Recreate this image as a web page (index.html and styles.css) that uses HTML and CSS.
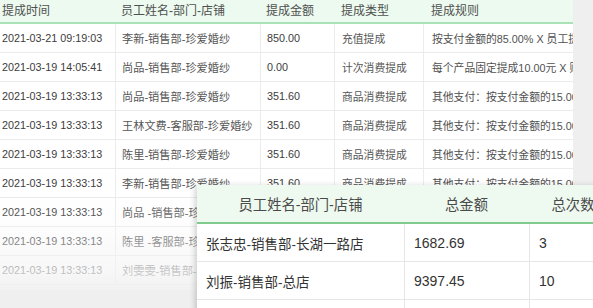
FILE: index.html
```html
<!DOCTYPE html>
<html lang="zh">
<head>
<meta charset="utf-8">
<title>提成明细</title>
<link rel="stylesheet" href="styles.css">
</head>
<body>
<div class="page">
  <div class="main">
    <div class="grid">
      <div class="row head">
        <div class="c">提成时间</div><div class="c">员工姓名-部门-店铺</div><div class="c">提成金额</div><div class="c">提成类型</div><div class="c">提成规则</div>
      </div>
      <div class="row">
        <div class="c num">2021-03-21 09:19:03</div><div class="c">李新-销售部-珍爱婚纱</div><div class="c num">850.00</div><div class="c">充值提成</div><div class="c">按支付金额的85.00% X 员工提成比例</div>
      </div>
      <div class="row">
        <div class="c num">2021-03-19 14:05:41</div><div class="c">尚品-销售部-珍爱婚纱</div><div class="c num">0.00</div><div class="c">计次消费提成</div><div class="c">每个产品固定提成10.00元 X 购买数量</div>
      </div>
      <div class="row">
        <div class="c num">2021-03-19 13:33:13</div><div class="c">尚品-销售部-珍爱婚纱</div><div class="c num">351.60</div><div class="c">商品消费提成</div><div class="c">其他支付：按支付金额的15.00%</div>
      </div>
      <div class="row">
        <div class="c num">2021-03-19 13:33:13</div><div class="c">王林文费-客服部-珍爱婚纱</div><div class="c num">351.60</div><div class="c">商品消费提成</div><div class="c">其他支付：按支付金额的15.00%</div>
      </div>
      <div class="row">
        <div class="c num">2021-03-19 13:33:13</div><div class="c">陈里-销售部-珍爱婚纱</div><div class="c num">351.60</div><div class="c">商品消费提成</div><div class="c">其他支付：按支付金额的15.00%</div>
      </div>
      <div class="row">
        <div class="c num">2021-03-19 13:33:13</div><div class="c">李新-销售部-珍爱婚纱</div><div class="c num">351.60</div><div class="c">商品消费提成</div><div class="c">其他支付：按支付金额的15.00%</div>
      </div>
      <div class="row">
        <div class="c num">2021-03-19 13:33:13</div><div class="c">尚品 -销售部-珍爱婚纱</div><div class="c num">351.60</div><div class="c">商品消费提成</div><div class="c">其他支付：按支付金额的15.00%</div>
      </div>
      <div class="row">
        <div class="c num">2021-03-19 13:33:13</div><div class="c">陈里 -客服部-珍爱婚纱</div><div class="c num">351.60</div><div class="c">商品消费提成</div><div class="c">其他支付：按支付金额的15.00%</div>
      </div>
      <div class="row">
        <div class="c num">2021-03-19 13:33:13</div><div class="c">刘雯雯-销售部-珍爱婚纱</div><div class="c num">351.60</div><div class="c">商品消费提成</div><div class="c">其他支付：按支付金额的15.00%</div>
      </div>
    </div>
    <div class="fade"></div>
  </div>
  <div class="side"></div>

  <div class="card">
    <div class="crow chead">
      <div class="cc">员工姓名-部门-店铺</div><div class="cc">总金额</div><div class="cc">总次数</div><div class="cc"></div>
    </div>
    <div class="crow">
      <div class="cc name">张志忠-销售部-长湖一路店</div><div class="cc">1682.69</div><div class="cc">3</div><div class="cc"></div>
    </div>
    <div class="crow">
      <div class="cc name">刘振-销售部-总店</div><div class="cc">9397.45</div><div class="cc">10</div><div class="cc"></div>
    </div>
    <div class="crow">
      <div class="cc name"></div><div class="cc"></div><div class="cc"></div><div class="cc"></div>
    </div>
  </div>
</div>
</body>
</html>
```

FILE: styles.css
```css
* { box-sizing: border-box; }
html, body {
  margin: 0;
  padding: 0;
  width: 593px;
  height: 308px;
  overflow: hidden;
  background: #efefef;
  font-family: "Liberation Sans", "Noto Sans CJK SC", sans-serif;
}
.page {
  position: relative;
  display: flex;
  width: 593px;
  height: 308px;
}
.main {
  position: relative;
  width: 573px;
  height: 290px;
  background: #ffffff;
  overflow: hidden;
}
.side {
  flex: 1;
  background: #efefef;
}
.grid {
  display: flex;
  flex-direction: column;
}
.row {
  display: grid;
  grid-template-columns: 115px 145px 74px 89px 150px;
  height: 29px;
  border-bottom: 1px solid #ebebeb;
}
.row .c {
  display: flex;
  align-items: center;
  white-space: nowrap;
  overflow: hidden;
  font-size: 10.8px;
  color: #4a4a4a;
  border-left: 1px solid #ececec;
  padding-left: 6px;
}
.row .c:first-child { border-left: none; padding-left: 2px; }
.row .c:nth-child(2) { font-size: 11.2px; color: #555555; }
.row .c:nth-child(4) { padding-left: 7px; color: #555555; }
.row .c:nth-child(5) { padding-left: 8px; color: #505050; }
.row .c.num { font-size: 10.8px; color: #3c3c3c; }
.row.head {
  height: 24px;
  background: #ecfaef;
  border-bottom: 2px solid #a9e2b6;
}
.row.head .c {
  border-left: none;
  align-items: flex-start;
  padding-top: 1px;
  font-size: 12px;
  color: #505050;
}
.fade {
  position: absolute;
  left: 0;
  right: 0;
  top: 196px;
  bottom: 0;
  background: linear-gradient(to bottom, rgba(242,242,242,0) 0%, rgba(246,246,246,0.25) 35%, rgba(244,244,244,0.7) 80%, rgba(239,239,239,0.85) 100%);
}
.card {
  position: absolute;
  left: 197px;
  top: 185px;
  width: 520px;
  background: #ffffff;
  box-shadow: -2px 1px 6px rgba(0,0,0,0.18);
}
.crow {
  display: grid;
  grid-template-columns: 207px 125px 88px 100px;
  height: 38px;
  border-bottom: 1px solid #e6e6e6;
}
.crow .cc {
  display: flex;
  align-items: center;
  padding-left: 9px;
  font-size: 14px;
  color: #333333;
  white-space: nowrap;
  border-left: 1px solid #e6e6e6;
}
.crow .cc:first-child { border-left: none; }
.crow .cc.name { font-size: 13.5px; }
.crow.chead {
  height: 39px;
  background: #eefaf0;
  border-bottom: 2px solid #7fcb8e;
}
.crow.chead .cc {
  border-left: none;
  justify-content: center;
  padding-left: 0;
  padding-bottom: 1px;
  font-size: 14.3px;
  color: #4a4a4a;
}
```
